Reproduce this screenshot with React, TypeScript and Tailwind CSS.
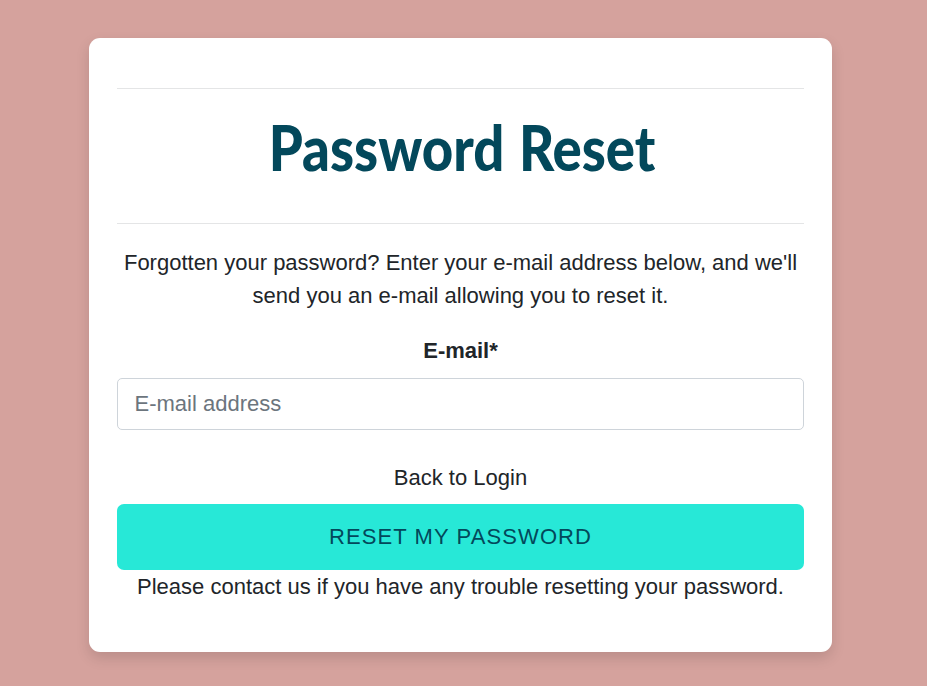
export default function App() {
  return (
    <div className="min-h-[686px] bg-[#d5a29d] pt-[38px] pl-[89px] font-['Liberation_Sans',Arial,sans-serif] text-[22px] leading-[33px] text-[#212529]">
      <main className="h-[614px] w-[743px] rounded-[11px] bg-white px-7 pt-[50px] text-center shadow-[0_6px_14px_rgba(0,0,0,0.13)]">
        <div className="flex h-[136px] items-start justify-center border-y border-[#e4e5e6] pt-[23px]">
          <h1 className="origin-center translate-x-[1.5px] scale-x-[0.865] whitespace-nowrap font-['Lato',sans-serif] text-[63px] leading-[70px] font-black [word-spacing:2px] text-[#03485b]">
            Password Reset
          </h1>
        </div>
        <p className="mt-[22px]">
          Forgotten your password? Enter your e-mail address below, and we'll send you an e-mail allowing you to reset it.
        </p>
        <form className="mt-[22px]" onSubmit={(e) => e.preventDefault()}>
          <label htmlFor="email" className="block font-bold">E-mail*</label>
          <input
            id="email"
            type="email"
            placeholder="E-mail address"
            className="mt-[11px] block h-[52px] w-full rounded-[5px] border border-[#ced4da] px-[16.5px] placeholder:text-[#6c757d]"
          />
          <a href="#login" className="mt-[31px] block">Back to Login</a>
          <button
            type="submit"
            className="mt-[10px] block h-[66px] w-full rounded-[7px] bg-[#27e8d7] pb-[2px] tracking-[1.1px] text-[#03485b]"
          >
            RESET MY PASSWORD
          </button>
        </form>
        <p>Please contact us if you have any trouble resetting your password.</p>
      </main>
    </div>
  );
}
